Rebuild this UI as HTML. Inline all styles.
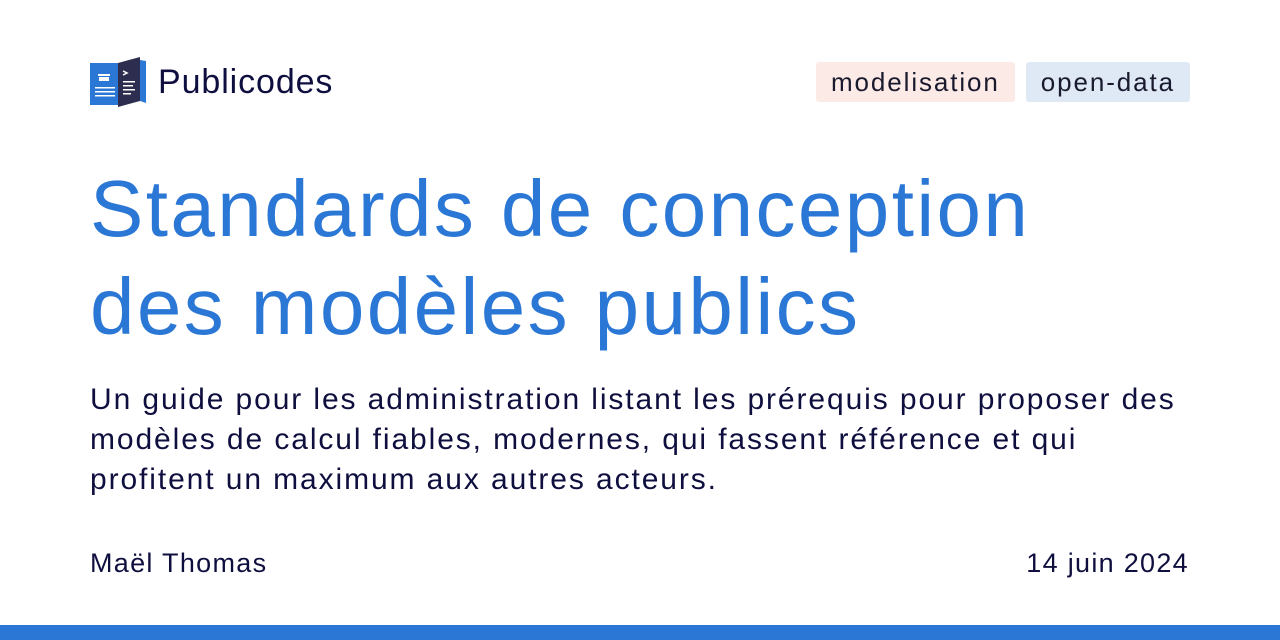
<!DOCTYPE html>
<html><head><meta charset="utf-8"><style>
body{margin:0;width:1280px;height:640px;background:#fff;position:relative;overflow:hidden;font-family:"Liberation Sans",sans-serif}
.logo{position:absolute;left:90px;top:57px}
.brand{position:absolute;left:158px;top:63px;font-size:34px;color:#0f0f3f;letter-spacing:0.9px}
.tag{position:absolute;top:62px;height:40px;line-height:40px;font-size:26px;color:#1a1a2e;padding:0 15px;border-radius:3px;letter-spacing:1.9px}
h1{position:absolute;left:90px;top:160px;margin:0;font-weight:normal;font-size:80px;line-height:98px;color:#2a77d6;letter-spacing:2.4px}
p{position:absolute;left:90px;top:380px;margin:0;font-size:30px;line-height:40px;color:#0f0f3f;white-space:nowrap;letter-spacing:1.9px}
.f{position:absolute;top:548px;font-size:27px;color:#0f0f3f;letter-spacing:1.3px}
.bar{position:absolute;left:0;bottom:0;width:1280px;height:15px;background:#2a77d6}
</style></head><body>
<svg class="logo" width="58" height="50" viewBox="0 0 58 50">
<rect x="0" y="6" width="30" height="42" fill="#2a77d6"/>
<polygon points="28,6 50,0 50,44 28,50" fill="#2d2d4f"/>
<polygon points="50,3 56,4 56,46 50,44" fill="#2a77d6"/>
<rect x="8" y="17" width="12" height="2" fill="#fff"/><rect x="9" y="20" width="10" height="4" fill="#fff"/>
<rect x="5" y="30" width="20" height="1.5" fill="#fff"/><rect x="5" y="34" width="20" height="1.5" fill="#fff"/><rect x="5" y="38" width="20" height="1.5" fill="#fff"/>
<path d="M33 14 l4 2 l-4 2" stroke="#fff" fill="none" stroke-width="1.5"/>
<rect x="33" y="24" width="12" height="1.5" fill="#fff"/><rect x="33" y="28" width="10" height="1.5" fill="#fff"/><rect x="33" y="32" width="12" height="1.5" fill="#fff"/><rect x="33" y="36" width="8" height="1.5" fill="#fff"/>
</svg>
<div class="brand">Publicodes</div>
<div class="tag" style="left:816px;background:#fbeae6">modelisation</div>
<div class="tag" style="right:90px;background:#dfe9f6">open-data</div>
<h1>Standards de conception<br>des modèles publics</h1>
<p>Un guide pour les administration listant les prérequis pour proposer des<br>modèles de calcul fiables, modernes, qui fassent référence et qui<br>profitent un maximum aux autres acteurs.</p>
<div class="f" style="left:90px">Maël Thomas</div>
<div class="f" style="right:91px">14 juin 2024</div>
<div class="bar"></div>
</body></html>
